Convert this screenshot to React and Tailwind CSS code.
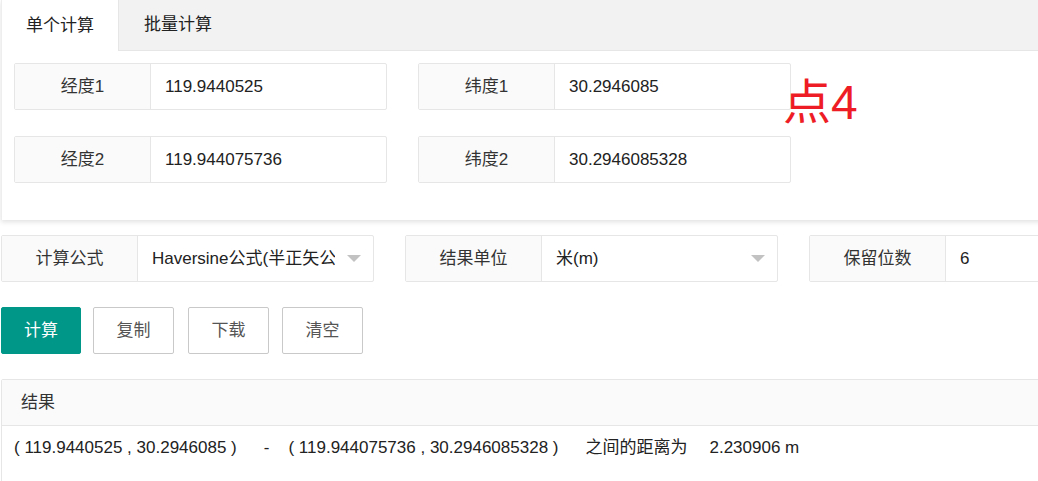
import React from 'react';

const Field = ({ label, value, width = 'w-[373px]', select = false }) => (
  <div className={`flex shrink-0 h-[47px] ${width} border border-[#e6e6e6] rounded-[2px] bg-white`}>
    <div className="w-[136px] shrink-0 flex items-center justify-center bg-[#fafafa] border-r border-[#e6e6e6] text-[17px] text-[#333]">
      {label}
    </div>
    <div className="flex-1 flex items-center pl-[14px] pr-[14px] text-[17px] text-[#222] min-w-0">
      <span className="flex-1 whitespace-nowrap overflow-hidden">{value}</span>
      {select && (
        <span className="shrink-0 w-0 h-0 border-l-[7px] border-r-[7px] border-t-[7px] border-l-transparent border-r-transparent border-t-[#c2c2c2] ml-3 mr-[-2px]" />
      )}
    </div>
  </div>
);

const Btn = ({ children, primary, className = '' }) => (
  <button
    className={`h-[47px] rounded-[2px] text-[17px] ${primary ? 'bg-[#009688] text-white border border-[#009688] w-[80px]' : 'w-[81px] bg-white text-[#555] border border-[#c9c9c9]'} ${className}`}
  >
    {children}
  </button>
);

export default function App() {
  return (
    <div
      className="w-[1038px] h-[481px] overflow-hidden bg-white relative"
      style={{ fontFamily: '"Liberation Sans", "Noto Sans CJK SC", sans-serif' }}
    >
      {/* tab card */}
      <div className="ml-[1px] w-[1045px] bg-white shadow-[0_2px_5px_rgba(0,0,0,0.12)] border-l border-[#eeeeee]">
        <div className="flex h-[51px] bg-[#f2f2f2] border-b border-[#e6e6e6]">
          <div className="w-[117px] h-[51px] bg-white flex items-center justify-center text-[17px] text-[#222] -mb-[1px] border-r border-[#e6e6e6]">
            单个计算
          </div>
          <div className="w-[118px] flex items-center justify-center text-[17px] text-[#222]">
            批量计算
          </div>
        </div>
        <div className="pl-[12px] pt-[12px] pb-[37px] flex flex-col gap-[26px]">
          <div className="flex gap-[31px]">
            <Field label="经度1" value="119.9440525" />
            <Field label="纬度1" value="30.2946085" />
          </div>
          <div className="flex gap-[31px]">
            <Field label="经度2" value="119.944075736" />
            <Field label="纬度2" value="30.2946085328" />
          </div>
        </div>
      </div>

      <div className="absolute left-[783px] top-[79px] text-[48px] leading-none text-[#ee1d25]">点4</div>

      {/* options */}
      <div className="flex gap-[31px] ml-[1px] mt-[15px]">
        <Field label="计算公式" value="Haversine公式(半正矢公式)" select width="w-[373px]" />
        <Field label="结果单位" value="米(m)" select width="w-[373px]" />
        <Field label="保留位数" value="6" width="w-[300px]" />
      </div>

      {/* buttons */}
      <div className="flex ml-[1px] mt-[25px]">
        <Btn primary>计算</Btn>
        <Btn className="ml-[12px]">复制</Btn>
        <Btn className="ml-[14px]">下载</Btn>
        <Btn className="ml-[13px]">清空</Btn>
      </div>

      {/* result */}
      <div className="ml-[1px] mt-[25px] w-[1045px] border border-[#e6e6e6] rounded-[2px]">
        <div className="h-[46px] bg-[#fafafa] border-b border-[#e6e6e6] flex items-center pl-[19px] text-[17px] text-[#333]">
          结果
        </div>
        <div className="flex pl-[12px] pt-[9px] h-[80px] text-[17px] text-[#222] whitespace-pre">
          <span>( 119.9440525 , 30.2946085 )</span>
          <span className="ml-[27px]">-</span>
          <span className="ml-[19px]">( 119.944075736 , 30.2946085328 )</span>
          <span className="ml-[27px]">之间的距离为</span>
          <span className="ml-[22px]">2.230906 m</span>
        </div>
      </div>
    </div>
  );
}
